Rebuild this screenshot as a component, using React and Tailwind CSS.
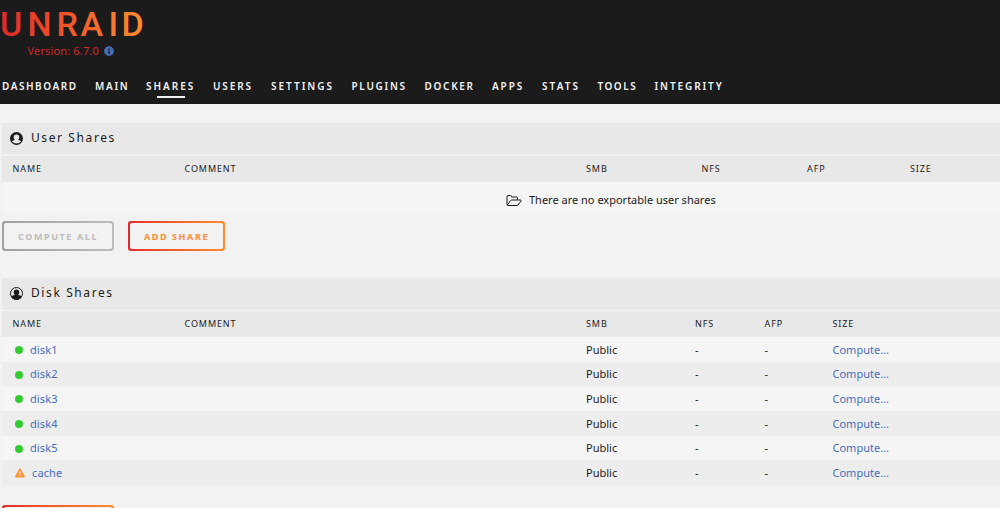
import { useState } from 'react';
import { FaInfoCircle, FaExclamationTriangle } from 'react-icons/fa';

const MENU = [
  { label: 'Dashboard', pos: 'w-[93px] tracking-[1.55px]' },
  { label: 'Main', pos: 'w-[51px] tracking-[1.7px]' },
  { label: 'Shares', pos: 'w-[67px] tracking-[2px]' },
  { label: 'Users', pos: 'w-[58px] tracking-[1.9px]' },
  { label: 'Settings', pos: 'w-[80.5px] tracking-[2px]' },
  { label: 'Plugins', pos: 'w-[73px] tracking-[1.7px]' },
  { label: 'Docker', pos: 'w-[67.5px] tracking-[1.7px]' },
  { label: 'Apps', pos: 'w-[50px] tracking-[1.9px]' },
  { label: 'Stats', pos: 'w-[55.5px] tracking-[2.1px]' },
  { label: 'Tools', pos: 'w-[57px] tracking-[1.5px]' },
  { label: 'Integrity', pos: 'w-[80px] tracking-[1.9px]' },
];

const DISKS = [
  { name: 'disk1', ok: true },
  { name: 'disk2', ok: true },
  { name: 'disk3', ok: true },
  { name: 'disk4', ok: true },
  { name: 'disk5', ok: true },
  { name: 'cache', ok: false },
];

const USER_GRID = 'grid grid-cols-[172px_401.5px_115.5px_105.5px_103px_1fr] pl-[10.5px]';
const DISK_GRID = 'grid grid-cols-[172px_401.5px_109px_69.5px_68px_1fr] pl-[10.5px]';

function Logo() {
  return (
    <svg width="160" height="46" viewBox="0 0 160 46" className="block" role="img" aria-label="UNRAID">
      <defs>
        <linearGradient id="brand" gradientUnits="userSpaceOnUse" x1="0" y1="0" x2="144" y2="0">
          <stop offset="0" stopColor="#e22828" />
          <stop offset="1" stopColor="#ff8c2f" />
        </linearGradient>
      </defs>
      <text x="0 27.500 56.500 80.500 108.500 121.500" y="36" fill="url(#brand)" fontSize="34" fontFamily="Roboto, sans-serif" fontWeight="500">UNRAID</text>
    </svg>
  );
}

function UserIcon() {
  return (
    <svg width="13" height="13" viewBox="0 0 26 26">
      <circle cx="13" cy="13" r="13" fill="#1c1b1b" />
      <path d="M13 5a5.500 5.500 0 0 1 5.500 6c0 2.500-1 4-2.500 5 3 .6 4.500 1.400 6 2.500a11 11 0 0 1-18 0c1.500-1.100 3-1.900 6-2.500-1.500-1-2.500-2.500-2.500-5A5.500 5.500 0 0 1 13 5z" fill="#e8e8e8" />
    </svg>
  );
}

function DiskIcon() {
  return (
    <svg width="13" height="13" viewBox="0 0 26 26">
      <circle cx="13" cy="13" r="12" fill="none" stroke="#1c1b1b" strokeWidth="2" />
      <path d="M13 5a5.500 5.500 0 0 1 5.500 6c0 2.500-1 4-2.500 5 4 .6 6 1.500 8 3a12.500 12.500 0 0 1-22 0c2-1.500 4-2.400 8-3-1.500-1-2.500-2.500-2.500-5A5.500 5.500 0 0 1 13 5z" fill="#1c1b1b" />
    </svg>
  );
}

function FolderIcon() {
  return (
    <svg width="16" height="13" viewBox="0 0 16 13" fill="none" stroke="#1c1b1b" strokeWidth="1" strokeLinejoin="round">
      <path d="M1 10.500V2.500Q1 1.500 2 1.500H4.500Q5.500 1.500 5.500 2.500V3H10.500Q11.500 3 11.500 4V6" />
      <path d="M1.300 11L4.500 6.500Q5 6 5.700 6H14.500Q15.500 6.200 15 7L12 11Q11.600 11.500 11 11.500H2Q1 11.500 1 10.500" />
    </svg>
  );
}

function SectionTitle({ icon, children }) {
  return (
    <div className="h-[31.5px] pl-2 flex items-center bg-[#e8e8e8]">
      {icon}
      <h2 className="ml-2 pb-px text-[12px] tracking-[1.6px]">{children}</h2>
    </div>
  );
}

function TableHead({ grid, cols }) {
  return (
    <div className={`mt-[1.5px] h-[26px] items-center bg-[#e8e8e8] text-[9px] tracking-[0.9px] uppercase ${grid}`}>
      {cols.map(c => <span key={c}>{c}</span>)}
    </div>
  );
}

function Button({ children, disabled, className }) {
  return (
    <button
      disabled={disabled}
      className={`h-[30px] rounded-[3px] p-[2px] text-[9px] font-bold uppercase tracking-[1.6px] bg-linear-to-r ${
        disabled ? 'from-[#a0a0a0] to-[#bcbcbc] text-[#bcbcbc]' : 'from-[#e22828] to-[#ff8c2f] text-[#ff8c2f]'
      } ${className}`}
    >
      <span className="flex h-full items-center justify-center rounded-[2px] bg-[#f2f2f2] pt-px">{children}</span>
    </button>
  );
}

export default function App() {
  const [active, setActive] = useState('Shares');

  return (
    <div className="h-[508px] w-[1000px] overflow-hidden bg-[#f2f2f2] text-[11px] text-[#1c1b1b] font-['Noto_Sans',sans-serif]">
      {/* Header */}
      <header className="h-[104px] bg-[#1c1b1b]">
        <Logo />
        <div className="ml-[27.5px] -mt-1 flex h-[18px] items-center text-[11px] tracking-[0.15px] text-[#d0282c]">
          <span>Version: 6.7.0</span>
          <FaInfoCircle className="ml-[5px] size-[10px] text-[#486dba]" />
        </div>
        <nav className="mt-[18px] flex pl-[2px]">
          {MENU.map(m => (
            <div key={m.label} className={`shrink-0 ${m.pos}`}>
              <button
                onClick={() => setActive(m.label)}
                className="flex flex-col items-center text-[10px] leading-[17px] font-semibold uppercase text-[#f2f2f2]"
              >
                {m.label}
                {active === m.label && <span className="mt-px h-[2px] w-7 bg-[#f2f2f2]" />}
              </button>
            </div>
          ))}
        </nav>
      </header>

      <main className="pl-[2px]">
        {/* User shares */}
        <section className="pt-[18.5px]">
          <SectionTitle icon={<UserIcon />}>User Shares</SectionTitle>
          <TableHead grid={USER_GRID} cols={['Name', 'Comment', 'SMB', 'NFS', 'AFP', 'Size']} />
          <div className="flex h-[31px] items-center bg-[#f5f5f5] pl-[504px] pt-[6px]">
            <FolderIcon />
            <span className="ml-[7px]">There are no exportable user shares</span>
          </div>
          <div className="mt-[8.5px] flex gap-[14px]">
            <Button disabled className="w-[112px]">Compute All</Button>
            <Button className="w-[97px]">Add Share</Button>
          </div>
        </section>

        {/* Disk shares */}
        <section className="mt-[27px]">
          <SectionTitle icon={<DiskIcon />}>Disk Shares</SectionTitle>
          <TableHead grid={DISK_GRID} cols={['Name', 'Comment', 'SMB', 'NFS', 'AFP', 'Size']} />
          <div>
            {DISKS.map(d => (
              <div key={d.name} className={`h-[24.67px] items-center pt-[1.5px] odd:bg-[#f5f5f5] even:bg-[#ededed] ${DISK_GRID}`}>
                <span className="flex items-center pl-[2.5px] text-[#486dba]">
                  {d.ok
                    ? <i className="size-2 rounded-full bg-[#33cc33]" />
                    : <FaExclamationTriangle className="size-[10px] text-[#ff9430]" />}
                  <a className="ml-[7px] tracking-[0.1px]">{d.name}</a>
                </span>
                <span />
                <span>Public</span>
                <span>-</span>
                <span>-</span>
                <a className="text-[#486dba]">Compute...</a>
              </div>
            ))}
          </div>
          <Button className="mt-5 w-[112px]" />
        </section>
      </main>
    </div>
  );
}
